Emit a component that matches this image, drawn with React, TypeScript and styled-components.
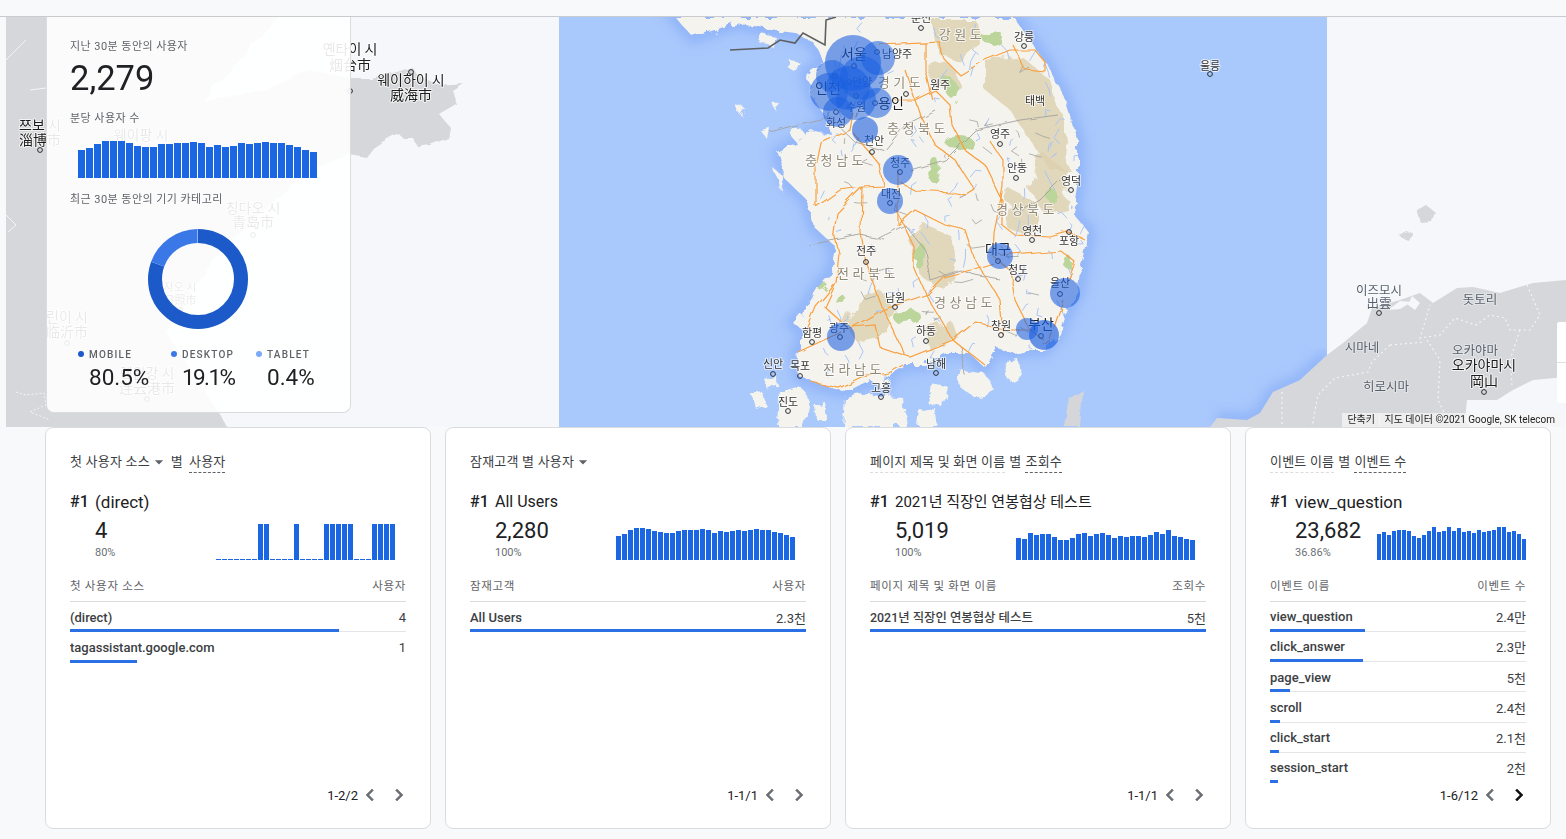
import React from 'react';
import styled, { createGlobalStyle } from 'styled-components';
import { MdChevronLeft, MdChevronRight, MdArrowDropDown } from 'react-icons/md';

const SANS = `Roboto, "Noto Sans CJK KR", sans-serif`;
const BLUE = '#1a66e3';

const Global = createGlobalStyle`
  html, body { margin: 0; padding: 0; background: #f8f9fa; }
  body { font-family: ${SANS}; color: #202124; overflow: hidden; }
`;

const Page = styled.div`
  width: 1566px;
  height: 839px;
  overflow: hidden;
`;

const TopStrip = styled.div`
  height: 16px;
  border-bottom: 1px solid #c9cbce;
`;

const MapArea = styled.div`
  position: relative;
  height: 410px;
  margin-left: 6px;
  background: #f6f7fa;
  overflow: hidden;
`;

const MapSvg = styled.svg`
  display: block;
  width: 1560px;
  height: 410px;
`;

const MapText = styled.text<{ $kind?: string }>`
  font-family: "Noto Sans CJK KR", sans-serif;
  text-anchor: middle;
  paint-order: stroke;
  stroke-linejoin: round;
  stroke-width: 2px;
  stroke: ${p => (p.$kind === 'gray' ? 'rgba(255,255,255,.35)' : 'rgba(255,255,255,.7)')};
  fill: ${p => (p.$kind === 'big' ? '#1c1c1c' : p.$kind === 'region' ? '#8f8877' : p.$kind === 'gray' ? '#56606e' : '#333')};
  font-size: ${p => (p.$kind === 'big' ? 14 : p.$kind === 'region' ? 13 : p.$kind === 'gray' ? 12.5 : 11)}px;
  letter-spacing: ${p => (p.$kind === 'region' ? 3.5 : 0)}px;
`;

const Overlay = styled.div`
  position: absolute;
  left: 40px;
  top: 0;
  width: 305px;
  height: 396px;
  box-sizing: border-box;
  padding: 22px 23px 0;
  background: rgba(255, 255, 255, 0.9);
  border: 1px solid #dadce0;
  border-top: 0;
  border-radius: 0 0 8px 8px;
`;

const OverlayLabel = styled.div`
  font-size: 11px;
  line-height: 16px;
  letter-spacing: 0.45px;
  color: #5f6368;
`;

const BigNumber = styled.div`
  font-size: 34.5px;
  line-height: 40px;
  margin: 3px 0 13px;
  color: #202124;
`;

const MinuteBars = styled.div`
  display: flex;
  align-items: flex-end;
  gap: 1px;
  height: 37px;
  margin: 14px 0 14px 8px;
`;

const MinuteBar = styled.div<{ $h: number }>`
  width: 7px;
  height: ${p => p.$h}px;
  background: ${BLUE};
`;

const DonutWrap = styled.div`
  display: flex;
  justify-content: center;
  margin: 21px 0 0;
  padding-right: 2px;
`;

const Legend = styled.div`
  display: grid;
  grid-template-columns: 93px 85px 1fr;
  margin: 18px 0 0 8px;
`;

const LegendLabel = styled.div<{ $color: string }>`
  display: flex;
  align-items: center;
  height: 14px;
  font-size: 10px;
  font-weight: 500;
  letter-spacing: 1.2px;
  color: #5f6368;
  &::before {
    content: '';
    width: 6px;
    height: 6px;
    margin-right: 5px;
    border-radius: 50%;
    background: ${p => p.$color};
  }
`;

const LegendValue = styled.div<{ $track?: number }>`
  margin: 2px 0 0 11px;
  font-size: 22.5px;
  line-height: 28px;
  letter-spacing: ${p => p.$track ?? 0}px;
  color: #202124;
`;

const Shortcut = styled.div`
  position: absolute;
  right: 186px;
  bottom: 0;
  height: 14px;
  padding: 0 5px;
  font-size: 10px;
  line-height: 14px;
  color: #222;
  background: rgba(245, 245, 245, 0.75);
`;

const Attribution = styled(Shortcut)`
  right: 6px;
  padding: 0 5px;
`;

const ZoomStub = styled.div`
  position: absolute;
  right: 0;
  top: 305px;
  width: 9px;
  height: 81px;
  background: #fff;
  border-radius: 2px 0 0 2px;
  &::after {
    content: '';
    display: block;
    height: 1px;
    margin-top: 40px;
    background: #e0e0e0;
  }
`;

const CardRow = styled.div`
  display: flex;
  gap: 14px;
  padding-left: 45px;
`;

const Card = styled.section<{ $w: number }>`
  display: flex;
  flex-direction: column;
  box-sizing: border-box;
  width: ${p => p.$w}px;
  height: 402px;
  padding: 24px 24px 21px 24px;
  background: #fff;
  border: 1px solid #dadce0;
  border-radius: 8px;
`;

const Title = styled.div`
  display: flex;
  align-items: flex-start;
  height: 22px;
  font-size: 13px;
  line-height: 20px;
  letter-spacing: 0.2px;
  color: #3c4043;
`;

const TitlePart = styled.span<{ $strong?: boolean }>`
  height: 20px;
  border-bottom: 1px dashed ${p => (p.$strong ? '#5f6368' : '#dadce0')};
`;

const TitleWord = styled.span<{ $flush?: boolean }>`
  margin: 0 ${p => (p.$flush ? '6px 0 2px' : '4px')};
`;

const Caret = styled(MdArrowDropDown)`
  margin: 0 0 0 -1px;
  color: #5f6368;
`;

const Rank = styled.div`
  display: flex;
  align-items: center;
  height: 22px;
  margin-top: 17px;
  color: #202124;
`;

const RankNo = styled.span`
  width: 25px;
  font-size: 16px;
  line-height: 22px;
  font-weight: 500;
`;

const RankName = styled.span<{ $size: number }>`
  font-size: ${p => p.$size}px;
  line-height: 20px;
`;

const Metric = styled.div`
  display: flex;
  justify-content: space-between;
  align-items: flex-end;
  height: 44px;
  margin-top: 3px;
`;

const MetricText = styled.div`
  padding-left: 25px;
`;

const MetricValue = styled.div`
  font-size: 22px;
  line-height: 28px;
`;

const MetricShare = styled.div`
  font-size: 11px;
  line-height: 15px;
  color: #6b7075;
`;

const Spark = styled.div<{ $inset: number }>`
  display: flex;
  align-items: flex-end;
  gap: 1px;
  margin-right: ${p => p.$inset}px;
`;

const SparkBar = styled.div<{ $h: number; $w: number }>`
  width: ${p => p.$w}px;
  height: ${p => p.$h}px;
  background: ${BLUE};
`;

const TableHead = styled.div`
  display: flex;
  justify-content: space-between;
  align-items: center;
  box-sizing: border-box;
  height: 33px;
  margin-top: 9px;
  border-bottom: 1px solid #dadce0;
  font-size: 11.5px;
  letter-spacing: 0.7px;
  color: #5f6368;
`;

const Row = styled.div`
  height: 30.25px;
`;

const RowLine = styled.div`
  display: flex;
  justify-content: space-between;
  align-items: center;
  height: 27.25px;
  padding-top: 3px;
  box-sizing: border-box;
  font-size: 13px;
  color: #3c4043;
`;

const RowName = styled.span<{ $size: number }>`
  font-size: ${p => p.$size}px;
  font-weight: 500;
`;

const RowValue = styled.span`
  font-weight: 400;
`;

const Track = styled.div<{ $line: boolean }>`
  box-sizing: border-box;
  height: 3px;
  border-bottom: 1px solid ${p => (p.$line ? '#e3e5e8' : 'transparent')};
`;

const Fill = styled.div`
  height: 3px;
  background: #2a6fe3;
`;

const Footer = styled.div`
  display: flex;
  justify-content: flex-end;
  align-items: center;
  height: 24px;
  margin-top: auto;
  margin-right: -5px;
  font-size: 13px;
  color: #202124;
`;

const Pager = styled.span<{ $on?: boolean }>`
  display: flex;
  width: 24px;
  height: 24px;
  margin-left: ${p => (p.$on === undefined ? 0 : 5)}px;
  color: ${p => (p.$on ? '#111' : '#6b6f74')};
  path:not([fill='none']) {
    stroke: currentColor;
    stroke-width: 0.6;
  }
`;

const minuteBars = [28, 30, 34, 37, 37, 37, 35, 32, 31, 31, 34, 34, 35, 35, 36, 35, 31, 33, 31, 32, 35, 34, 35, 36, 35, 35, 33, 31, 28, 26];

const tall = [7, 8, 13, 18, 19, 20, 21, 22, 26, 27, 28, 29];

type CardData = {
  w: number;
  title: React.ReactNode;
  top: string;
  topSize: number;
  value: string;
  share: string;
  spark: number[];
  barW: number;
  inset: number;
  head: [string, string];
  rows: [string, string, number][];
  rowSize?: number;
  pages: string;
  nextOn?: boolean;
};

const cards: CardData[] = [
  {
    w: 386,
    title: (
      <>
        첫 사용자 소스<Caret size={20} /><TitleWord $flush>별</TitleWord>
        <TitlePart $strong>사용자</TitlePart>
      </>
    ),
    top: '(direct)',
    topSize: 17,
    value: '4',
    share: '80%',
    spark: Array.from({ length: 30 }, (_, i) => (tall.includes(i) ? 36 : 1)),
    barW: 5,
    inset: 11,
    head: ['첫 사용자 소스', '사용자'],
    rows: [['(direct)', '4', 80], ['tagassistant.google.com', '1', 20]],
    pages: '1-2/2',
  },
  {
    w: 386,
    title: (
      <>
        잠재고객 별 사용자<Caret size={20} />
      </>
    ),
    top: 'All Users',
    topSize: 16,
    value: '2,280',
    share: '100%',
    spark: [24, 26, 30, 32, 32, 31, 29, 28, 27, 27, 29, 30, 30, 30, 31, 30, 27, 29, 28, 29, 30, 29, 30, 31, 30, 30, 28, 27, 25, 23],
    barW: 5,
    inset: 11,
    head: ['잠재고객', '사용자'],
    rows: [['All Users', '2.3천', 100]],
    pages: '1-1/1',
  },
  {
    w: 386,
    title: (
      <>
        <TitlePart>페이지 제목 및 화면 이름</TitlePart><TitleWord>별</TitleWord>
        <TitlePart $strong>조회수</TitlePart>
      </>
    ),
    top: '2021년 직장인 연봉협상 테스트',
    topSize: 15,
    value: '5,019',
    share: '100%',
    spark: [22, 21, 27, 25, 26, 26, 23, 20, 20, 22, 26, 27, 24, 26, 27, 25, 22, 24, 23, 24, 24, 23, 25, 28, 26, 30, 24, 23, 21, 20],
    barW: 5,
    inset: 11,
    head: ['페이지 제목 및 화면 이름', '조회수'],
    rows: [['2021년 직장인 연봉협상 테스트', '5천', 100]],
    rowSize: 12.4,
    pages: '1-1/1',
  },
  {
    w: 306,
    title: (
      <>
        <TitlePart>이벤트 이름</TitlePart><TitleWord>별</TitleWord>
        <TitlePart $strong>이벤트 수</TitlePart>
      </>
    ),
    top: 'view_question',
    topSize: 17,
    value: '23,682',
    share: '36.86%',
    spark: [26, 28, 25, 29, 30, 30, 29, 24, 22, 25, 29, 33, 28, 29, 33, 29, 32, 28, 29, 27, 30, 28, 29, 30, 33, 33, 28, 29, 26, 21],
    barW: 4,
    inset: 0,
    head: ['이벤트 이름', '이벤트 수'],
    rows: [
      ['view_question', '2.4만', 37],
      ['click_answer', '2.3만', 36.3],
      ['page_view', '5천', 7.8],
      ['scroll', '2.4천', 3.9],
      ['click_start', '2.1천', 3.5],
      ['session_start', '2천', 3.1],
    ],
    pages: '1-6/12',
    nextOn: true,
  },
];

const labels: [number, number, string, string?][] = [
  [40, 130, '쯔보 시', 'big'], [40, 145, '淄博市', 'big'], [350, 54, '옌타이 시', 'big'], [350, 70, '烟台市', 'big'],
  [411, 85, '웨이하이 시', 'big'], [411, 100, '威海市', 'big'], [141, 140, '웨이팡 시', 'big'], [253, 213, '칭다오 시', 'big'],
  [253, 227, '青岛市', 'big'], [180, 291, '자오 시'], [180, 304, '日照市'], [67, 322, '린이 시', 'big'], [67, 337, '临沂市', 'big'],
  [147, 378, '롄윈강 시', 'big'], [147, 393, '连云港市', 'big'],
  [921, 22, '춘천'], [962, 39, '강원도', 'region'], [1024, 41, '강릉'], [897, 58, '남양주', 'small'], [854, 59, '서울', 'big'],
  [901, 87, '경기도', 'region'], [940, 89, '원주'], [828, 93, '인천', 'big'], [862, 86, '안양'], [891, 108, '용인', 'big'],
  [856, 111, '수원'], [1035, 105, '태백'], [836, 127, '화성'], [918, 133, '충청북도', 'region'], [874, 145, '천안'],
  [1000, 138, '영주'], [900, 167, '청주'], [836, 165, '충청남도', 'region'], [1017, 172, '안동'], [1071, 185, '영덕'],
  [891, 198, '대전'], [1027, 214, '경상북도', 'region'], [1032, 235, '영천'], [1069, 245, '포항'], [998, 254, '대구', 'big'],
  [866, 255, '전주'], [868, 278, '전라북도', 'region'], [1018, 274, '청도'], [1060, 287, '울산'], [895, 302, '남원'],
  [965, 307, '경상남도', 'region'], [1041, 329, '부산', 'big'], [1001, 330, '창원'], [926, 335, '하동'], [839, 332, '광주'],
  [812, 337, '함평'], [773, 368, '신안'], [800, 370, '목포'], [854, 374, '전라남도', 'region'], [936, 368, '남해'],
  [881, 392, '고흥'], [788, 406, '진도'], [1210, 70, '울릉'],
  [1379, 295, '이즈모시', 'gray'], [1379, 308, '出雲', 'gray'], [1480, 304, '돗토리', 'gray'], [1362, 352, '시마네', 'gray'],
  [1475, 355, '오카야마', 'gray'], [1484, 370, '오카야마시', 'big'], [1484, 386, '岡山', 'big'], [1386, 391, '히로시마', 'gray'],
];

const towns: [number, number][] = [
  [921, 28], [1024, 46], [877, 52], [854, 66], [835, 76], [849, 82], [906, 94], [856, 96], [875, 103], [836, 112],
  [872, 152], [900, 172], [890, 203], [1000, 144], [1016, 178], [1071, 190], [1032, 240], [1069, 232], [998, 261],
  [866, 262], [1018, 279], [1060, 294], [895, 307], [1001, 335], [926, 341], [1041, 336], [840, 337], [812, 342],
  [773, 374], [800, 376], [936, 373], [881, 397], [788, 411], [1210, 74], [1379, 313], [1484, 392], [411, 72],
  [350, 91], [40, 150], [253, 235], [67, 343], [147, 399], [180, 310],
];

const circles: [number, number, number, number][] = [
  [853, 63, 28, 0.58], [878, 58, 17, 0.55], [862, 78, 22, 0.5], [832, 76, 16, 0.5], [829, 92, 19, 0.55], [848, 88, 22, 0.55],
  [856, 100, 20, 0.5], [838, 112, 15, 0.55], [877, 103, 15, 0.55], [865, 130, 13, 0.6], [898, 170, 15, 0.58],
  [890, 201, 13, 0.58], [1000, 256, 13, 0.58], [841, 337, 14, 0.58], [1065, 293, 15, 0.58], [1044, 335, 15, 0.66], [1027, 329, 11, 0.58],
];

const roads = [
  '925,43 939,42 945,60 960,75 985,60 1010,50 1035,50 1046,63 1046,72',
  '932,100 925,70 925,43 880,45',
  '893,100 915,100 935,90 950,105 952,125 965,150 985,165 1002,200 1002,225 1015,235 1050,237 1068,232 1085,240',
  '905,70 920,115 935,145 955,160 975,190 967,195 950,192 915,190 900,182',
  '989,140 1003,160 1003,187 994,233 993,257',
  '994,257 1010,270 1015,300 1030,330 1044,340',
  '1063,300 1050,340 1044,345',
  '1000,255 1060,250 1075,262 1065,290',
  '853,327 875,325 880,347 910,357 953,340 975,322 1007,330 1030,330',
  '862,187 837,213 834,233 839,253 836,283 825,307 836,317 850,330',
  '807,330 816,307 836,283',
  '816,207 816,167 821,143 850,130 853,113',
  '898,213 914,247 914,267 925,293 943,323 953,340 985,365',
  '853,327 882,310 925,295 943,277 971,270 993,263',
  '799,353 853,328',
  '811,382 839,388 861,377 889,373 903,365',
  '862,187 861,233 866,263 882,307 905,355',
  '853,133 880,165 884,186 862,187',
  '898,170 898,225 915,210 945,225 965,230 975,260 1000,300 1003,335',
  '816,207 840,190 862,187',
  '1013,45 1025,70 1046,72',
];

// short tributaries scattered over the land, seeded so that every render is the same
let seed = 17;
const rnd = () => {
  seed = (seed * 16807) % 2147483647;
  return seed / 2147483647;
};
const rivers = Array.from({ length: 130 }, () => {
  const x = 800 + rnd() * 285;
  const y = 20 + rnd() * 360;
  return `M${x} ${y} l${rnd() * 12 - 6} ${rnd() * 12 - 2} l${rnd() * 12 - 6} ${rnd() * 10}`;
});
const ridges = Array.from({ length: 34 }, () => {
  const x = 830 + rnd() * 220;
  const y = 60 + rnd() * 270;
  return `M${x} ${y} l${rnd() * 18 - 9} ${rnd() * 8} l${rnd() * 14} ${rnd() * 12 - 6}`;
});

const dmz = 'M730 50 L768 48 L780 40 L795 43 L803 33 L825 45 L826 20 L836 17';
const borders = [
  'M771 133 L800 125 L830 118 L855 142 L885 150 L905 125 L935 110',
  'M910 170 L945 160 L975 130 L1020 120 L1058 115',
  'M1000 245 L1010 260', 'M808 245 L835 240 L860 235 L885 240', 'M875 240 L905 225 L925 250 L930 280 L960 270 L975 275 L1000 280',
  'M960 345 L965 375', 'M1060 180 L1040 200 L1015 215',
];

const japanBorders = [
  'M1527 285 L1540 315 L1530 330 L1510 330 L1505 318 L1490 315 L1476 325 L1455 318 L1440 335 L1420 338 L1430 305',
  'M1520 330 L1510 360 L1512 385', 'M1427 340 L1440 360 L1438 400 L1450 425', 'M1390 345 L1425 342',
  'M1390 345 L1372 362 L1368 372 L1335 378 L1318 395 L1312 427', 'M1282 392 L1282 425',
];

const koreaLand =
  'M675 17 L1014 17 L1046 63 L1064 97 L1078 140 L1078 180 L1073 213 L1089 233 L1082 267 L1078 293 L1064 317 L1059 333 L1044 350 L1025 350 L1014 353 L996 347 L984 367 L968 352 L945 352 L925 365 L905 365 L890 373 L882 388 L870 380 L846 392 L814 383 L800 377 L796 353 L807 333 L793 323 L811 300 L818 287 L832 273 L836 247 L814 227 L807 200 L786 180 L778 153 L800 140 L811 130 L832 135 L828 120 L814 100 L807 73 L825 63 L814 43 L796 33 L770 30 L736 23 L693 37 Z';

const islands = [
  'M780 392 L800 386 L810 402 L804 427 L778 427 Z', 'M845 398 L870 394 L903 398 L906 427 L843 427 Z', 'M962 370 L985 374 L996 392 L975 398 L958 385 Z',
  'M930 382 L948 387 L943 408 L927 403 Z', 'M764 379 L775 375 L778 385 L768 390 Z', 'M1005 362 L1019 360 L1021 376 L1010 382 Z',
  'M760 33 L775 36 L772 45 L758 42 Z', 'M790 60 L800 62 L795 72 L788 68 Z', 'M770 100 L780 104 L775 110 Z', 'M775 170 L785 178 L780 190 Z',
  'M735 105 L745 108 L740 115 Z', 'M760 130 L770 128 L768 140 Z', 'M1206 62 L1212 62 L1212 68 L1206 68 Z', 'M815 405 L825 402 L828 420 L816 420 Z',
  'M920 410 L935 408 L938 427 L918 427 Z', 'M752 395 L762 392 L765 404 L755 408 Z', 'M790 135 L800 128 L806 135 L796 142 Z',
];

const mountains = [
  'M930 20 L975 20 L985 40 L960 60 L940 55 Z', 'M985 60 L1020 55 L1050 80 L1062 120 L1070 170 L1050 170 L1030 140 L1010 110 L985 90 Z',
  'M1040 150 L1065 170 L1068 210 L1045 215 L1030 190 Z', 'M908 240 L925 225 L950 235 L960 265 L945 290 L925 280 Z',
  'M857 300 L880 290 L895 310 L880 340 L860 345 L845 325 Z', 'M925 330 L950 320 L960 340 L930 350 Z', 'M925 62 L950 65 L960 85 L935 90 Z',
  'M1010 190 L1040 205 L1030 240 L1005 225 Z',
];

const greens: [number, number, number, number][] = [
  [993, 38, 10, 8], [960, 143, 14, 7], [934, 170, 6, 13], [921, 257, 6, 14], [907, 317, 14, 8], [814, 282, 9, 6],
  [1053, 197, 6, 6], [1068, 262, 5, 6], [843, 302, 5, 5], [951, 88, 4, 10],
];

function MapDrawing() {
  return (
    <MapSvg viewBox="6 17 1560 410" aria-hidden>
      <defs>
        <filter id="coast" x="-10%" y="-10%" width="120%" height="120%"><feGaussianBlur stdDeviation="6" /></filter>
        <filter id="rough" x="-5%" y="-5%" width="110%" height="110%">
          <feTurbulence type="fractalNoise" baseFrequency="0.09" numOctaves="3" seed="4" result="n" />
          <feDisplacementMap in="SourceGraphic" in2="n" scale="11" />
        </filter>
        <filter id="terrain" x="-20%" y="-20%" width="140%" height="140%">
          <feTurbulence type="fractalNoise" baseFrequency="0.06" numOctaves="3" seed="9" result="n" />
          <feDisplacementMap in="SourceGraphic" in2="n" scale="16" />
          <feGaussianBlur stdDeviation="0.7" />
        </filter>
        <filter id="wavy" x="-5%" y="-5%" width="110%" height="110%">
          <feTurbulence type="fractalNoise" baseFrequency="0.05" numOctaves="2" seed="2" result="n" />
          <feDisplacementMap in="SourceGraphic" in2="n" scale="6" />
        </filter>
        <clipPath id="sea"><rect x="559" y="17" width="768" height="410" /></clipPath>
        <clipPath id="land"><path d={koreaLand} /></clipPath>
      </defs>

      {/* china + shandong */}
      <path
        fill="#d6d7da"
        filter="url(#wavy)"
        d="M0 10 L283 10 L240 60 L203 100 L260 92 L310 70 L350 78 L370 78 L397 72 L412 67 L417 75 L437 85 L463 83 L452 90 L457 105 L440 115 L450 127 L448 138 L430 145 L418 147 L413 138 L403 138 L398 133 L377 145 L367 158 L350 155 L316 166 L283 193 L220 250 L167 333 L233 435 L0 435 Z"
      />
      <g stroke="#f4f5f7" strokeWidth="1" fill="none">
        <path d="M16 392 L26 395 L44 393 L46 405 L30 412 L50 420" strokeDasharray="2 2" />
        <path d="M6 60 L26 40 M30 90 L46 88 M6 215 L16 225 L8 232" />
      </g>

      {/* sea square with the peninsula */}
      <rect x="559" y="17" width="768" height="410" fill="#a9c8fc" />
      <g clipPath="url(#sea)">
        <path d={koreaLand} fill="none" stroke="#8fb3f8" strokeWidth="13" filter="url(#coast)" />
        <path d="M1327 355 L1300 380 L1273 392 L1260 413 L1247 420 L1217 418" fill="none" stroke="#8fb3f8" strokeWidth="12" filter="url(#coast)" />
        <g filter="url(#rough)" fill="#f5f3ee">
          <path d={koreaLand} />
          {islands.map(d => (
            <path key={d} d={d} />
          ))}
        </g>
        <g clipPath="url(#land)">
          <g filter="url(#terrain)">
            {mountains.map(d => (
              <path key={d} d={d} fill="#dccfae" opacity="0.8" />
            ))}
            {greens.map(([x, y, rx, ry]) => (
              <ellipse key={`${x}-${y}`} cx={x} cy={y} rx={rx} ry={ry} fill="#bcd59a" />
            ))}
          </g>
          <g fill="none" stroke="#a9c5f6" strokeWidth="1">
            {rivers.map(d => (
              <path key={d} d={d} />
            ))}
          </g>
          <g fill="none" stroke="#a3a29d" strokeWidth="0.8">
            {ridges.map(d => (
              <path key={d} d={d} />
            ))}
          </g>
        </g>
        <g fill="none" stroke="#a3a29d" strokeWidth="0.9" filter="url(#wavy)">
          {borders.map(d => (
            <path key={d} d={d} />
          ))}
        </g>
        <path d={dmz} fill="none" stroke="#5d5f61" strokeWidth="1.6" />
        <g fill="none" stroke="#f9a03f" strokeWidth="1.2" filter="url(#wavy)">
          {roads.map(p => (
            <polyline key={p} points={p} />
          ))}
        </g>
        <path d="M1065 427 L1070 398 L1083 390 L1080 427 Z" fill="#d4d6da" filter="url(#wavy)" />
      </g>

      {/* japan */}
      <path
        fill="#d6d7da"
        d="M1210 427 L1217 418 L1247 420 L1260 413 L1273 392 L1300 380 L1327 355 L1343 343 L1367 323 L1372 308 L1400 300 L1420 293 L1433 303 L1457 288 L1473 287 L1500 293 L1533 283 L1566 280 L1566 377 L1533 380 L1513 390 L1497 400 L1467 400 L1465 420 L1470 427 Z"
      />
      <path fill="#f6f7fa" d="M1400 301 L1412 302 L1400 309 L1388 310 Z M1412 296 L1420 303 L1415 310 L1408 305 Z M1500 400 L1530 392 L1520 412 L1495 416 Z" />
      <path fill="#d6d7da" filter="url(#wavy)" d="M1417 210 L1426 205 L1435 212 L1432 222 L1421 223 Z M1398 234 L1405 230 L1412 232 L1408 240 L1402 238 Z" />
      <g fill="none" stroke="#f3f4f6" strokeWidth="1.2" strokeDasharray="2 3">
        {japanBorders.map(d => (
          <path key={d} d={d} />
        ))}
      </g>

      {labels.map(([x, y, text, kind]) => (
        <MapText key={`${x}-${y}`} x={x} y={y} $kind={kind}>
          {text}
        </MapText>
      ))}
      {towns.map(([x, y]) => (
        <circle key={`${x}-${y}`} cx={x} cy={y} r="2.4" fill="none" stroke="#2a2d33" strokeWidth="1" />
      ))}

      {circles.map(([x, y, r, o]) => (
        <circle key={`${x}-${y}`} cx={x} cy={y} r={r} fill="#1a5fe0" opacity={o} />
      ))}
    </MapSvg>
  );
}

function Donut() {
  const r = 43;
  const c = 2 * Math.PI * r;
  return (
    <svg width="100" height="100" viewBox="0 0 100 100">
      <g fill="none" strokeWidth="14" transform="rotate(-90 50 50)">
        <circle cx="50" cy="50" r={r} stroke="#1b5ac8" strokeDasharray={`${c * 0.805} ${c}`} />
        <circle cx="50" cy="50" r={r} stroke="#3b78e7" strokeDasharray={`${c * 0.191} ${c}`} strokeDashoffset={-c * 0.805} />
        <circle cx="50" cy="50" r={r} stroke="#7baaf7" strokeDasharray={`${c * 0.004} ${c}`} strokeDashoffset={-c * 0.996} />
      </g>
    </svg>
  );
}

function ReportCard({ d }: { d: CardData }) {
  return (
    <Card $w={d.w}>
      <Title>{d.title}</Title>
      <Rank>
        <RankNo>#1</RankNo>
        <RankName $size={d.topSize}>{d.top}</RankName>
      </Rank>
      <Metric>
        <MetricText>
          <MetricValue>{d.value}</MetricValue>
          <MetricShare>{d.share}</MetricShare>
        </MetricText>
        <Spark $inset={d.inset}>
          {d.spark.map((h, i) => (
            <SparkBar key={i} $h={h} $w={d.barW} />
          ))}
        </Spark>
      </Metric>
      <TableHead>
        <span>{d.head[0]}</span>
        <span>{d.head[1]}</span>
      </TableHead>
      {d.rows.map(([name, value, pct], i) => (
        <Row key={name}>
          <RowLine>
            <RowName $size={d.rowSize ?? 13}>{name}</RowName>
            <RowValue>{value}</RowValue>
          </RowLine>
          <Track $line={i < d.rows.length - 1}>
            <Fill style={{ width: `${pct}%` }} />
          </Track>
        </Row>
      ))}
      <Footer>
        {d.pages}
        <Pager>
          <MdChevronLeft size={24} />
        </Pager>
        <Pager $on={!!d.nextOn}>
          <MdChevronRight size={24} />
        </Pager>
      </Footer>
    </Card>
  );
}

export default function App() {
  return (
    <Page>
      <Global />
      <TopStrip />
      <MapArea>
        <MapDrawing />
        <Overlay>
          <OverlayLabel>지난 30분 동안의 사용자</OverlayLabel>
          <BigNumber>2,279</BigNumber>
          <OverlayLabel>분당 사용자 수</OverlayLabel>
          <MinuteBars>
            {minuteBars.map((h, i) => (
              <MinuteBar key={i} $h={h} />
            ))}
          </MinuteBars>
          <OverlayLabel>최근 30분 동안의 기기 카테고리</OverlayLabel>
          <DonutWrap>
            <Donut />
          </DonutWrap>
          <Legend>
            <div>
              <LegendLabel $color="#1b5ac8">MOBILE</LegendLabel>
              <LegendValue>80.5%</LegendValue>
            </div>
            <div>
              <LegendLabel $color="#3b78e7">DESKTOP</LegendLabel>
              <LegendValue $track={-1.6}>19.1%</LegendValue>
            </div>
            <div>
              <LegendLabel $color="#7baaf7">TABLET</LegendLabel>
              <LegendValue>0.4%</LegendValue>
            </div>
          </Legend>
        </Overlay>
        <ZoomStub />
        <Shortcut>단축키</Shortcut>
        <Attribution>지도 데이터 ©2021 Google, SK telecom</Attribution>
      </MapArea>
      <CardRow>
        {cards.map(d => (
          <ReportCard key={d.head[0]} d={d} />
        ))}
      </CardRow>
    </Page>
  );
}
